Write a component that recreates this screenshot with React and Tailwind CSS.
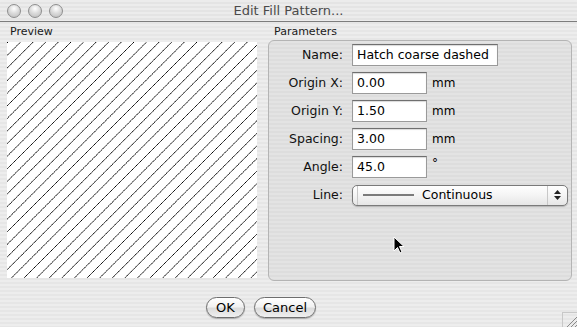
import React from 'react'

const font = "font-['DejaVu_Sans',sans-serif]"

const Light = () => (
    <div className="w-[14px] h-[14px] rounded-full border border-[#8e8e8e] bg-[radial-gradient(circle_at_50%_30%,#ffffff_0%,#dcdcdc_45%,#b9b9b9_100%)]"></div>
)

const Hatch = () => {
    const lines = []
    for (let k = -20; k < 40; k++) {
        const c = 1 + 12.6 * k
        lines.push(<line key={k} x1={c} y1={0} x2={c - 236} y2={236} stroke="#000" strokeWidth="1" strokeDasharray="1.6 0.25" />)
    }
    return (
        <svg width="250" height="236" className="block bg-white">
            {lines}
        </svg>
    )
}

const Field = ({ label, value, width = 'w-[75px]', unit }) => (
    <div className="flex items-center h-[22px]">
        <div className="w-[75px] text-right text-[12.5px] text-[#111] pr-[1px]">{label}</div>
        <div className={`ml-[8px] ${width} h-[22px] bg-white border border-[#9a9a9a] border-t-[#6f6f6f] shadow-[inset_0_1px_1px_rgba(0,0,0,0.15)] flex items-center pl-[4px] text-[12.5px] text-black`}>
            {value}
        </div>
        {unit === 'mm' && <div className="ml-[5px] text-[12px] text-black">mm</div>}
        {unit === 'deg' && <div className="ml-[5px] self-start -mt-[2px] text-[12px] text-black">°</div>}
    </div>
)

export default function App() {
    return (
        <div className={`${font} relative w-[577px] h-[327px] overflow-hidden bg-[repeating-linear-gradient(180deg,#ededed_0px,#ededed_2px,#e6e6e6_2px,#e6e6e6_4px)] flex flex-col`}>
            {/* Title bar */}
            <div className="h-[22px] rounded-t-[5px] border-b border-[#7d7d7d] bg-[repeating-linear-gradient(180deg,#ececec_0px,#ececec_2px,#e4e4e4_2px,#e4e4e4_4px)] flex items-center relative">
                <div className="flex gap-[7px] pl-[7px]">
                    <Light />
                    <Light />
                    <Light />
                </div>
                <div className="absolute inset-0 flex items-center justify-center text-[13px] text-[#4a4a4a]">Edit Fill Pattern...</div>
            </div>

            {/* Main content */}
            <div className="flex">
                <div className="pl-[7px] w-[257px]">
                    <div className="h-[20px] pl-[3px] pt-[2px] text-[11px] text-[#1a1a1a]">Preview</div>
                    <Hatch />
                </div>
                <div className="ml-[11px] w-[304px]">
                    <div className="h-[18px] pl-[6px] pt-[2px] text-[11px] text-[#1a1a1a]">Parameters</div>
                    <div className="h-[241px] rounded-[6px] border border-[#b4b4b4] bg-[repeating-linear-gradient(180deg,#e3e3e3_0px,#e3e3e3_2px,#dddddd_2px,#dddddd_4px)] pt-[3px] flex flex-col gap-[6px]">
                        <Field label="Name:" value="Hatch coarse dashed" width="w-[146px]" />
                        <Field label="Origin X:" value="0.00" unit="mm" />
                        <Field label="Origin Y:" value="1.50" unit="mm" />
                        <Field label="Spacing:" value="3.00" unit="mm" />
                        <Field label="Angle:" value="45.0" unit="deg" />
                        <div className="flex items-center h-[22px]">
                            <div className="w-[75px] text-right text-[12.5px] text-[#111] pr-[1px]">Line:</div>
                            <div className="ml-[8px] w-[216px] h-[21px] rounded-[5px] border border-[#7a7a7a] bg-[linear-gradient(180deg,#ffffff_0%,#f4f4f4_50%,#e6e6e6_100%)] shadow-[0_1px_1px_rgba(0,0,0,0.2)] flex items-center">
                                <div className="w-[5px] h-full border-r border-[#c8c8c8]"></div>
                                <div className="ml-[5px] w-[51px] h-[2px] bg-[#7b7b7b]"></div>
                                <div className="ml-[8px] flex-1 text-[12.5px] text-black">Continuous</div>
                                <div className="w-[20px] h-full border-l border-[#c8c8c8] flex flex-col items-center justify-center gap-[2px]">
                                    <svg width="7" height="4" viewBox="0 0 7 4"><path d="M3.5 0 L7 4 L0 4 Z" fill="#222" /></svg>
                                    <svg width="7" height="4" viewBox="0 0 7 4"><path d="M0 0 L7 0 L3.5 4 Z" fill="#222" /></svg>
                                </div>
                            </div>
                        </div>
                    </div>
                </div>
            </div>

            {/* Buttons */}
            <div className="flex gap-[9px] pl-[206px] mt-[16px]">
                <button className="w-[39px] h-[21px] rounded-full border border-[#6e6e6e] bg-[linear-gradient(180deg,#ffffff_0%,#f2f2f2_45%,#dcdcdc_55%,#f0f0f0_100%)] shadow-[0_1px_1px_rgba(0,0,0,0.25)] text-[13px] text-black flex items-center justify-center">OK</button>
                <button className="w-[62px] h-[21px] rounded-full border border-[#6e6e6e] bg-[linear-gradient(180deg,#ffffff_0%,#f2f2f2_45%,#dcdcdc_55%,#f0f0f0_100%)] shadow-[0_1px_1px_rgba(0,0,0,0.25)] text-[13px] text-black flex items-center justify-center">Cancel</button>
            </div>

            {/* Mouse cursor */}
            <svg className="absolute left-[393px] top-[236px]" width="12" height="19" viewBox="0 0 12 19">
                <path d="M1 1 L1 15 L4.5 11.5 L7 17 L9 16 L6.5 10.5 L11 10.5 Z" fill="#000" stroke="#fff" strokeWidth="1" />
            </svg>

            {/* Resize grip */}
            <div className="absolute right-0 bottom-0 w-[15px] h-[15px] border-l border-t border-[#c8c8c8]">
                <svg width="15" height="15" viewBox="0 0 15 15" className="block">
                    <path d="M4 14 L14 4 M8 14 L14 8 M12 14 L14 12" stroke="#8a8a8a" strokeWidth="1" />
                </svg>
            </div>
        </div>
    )
}
